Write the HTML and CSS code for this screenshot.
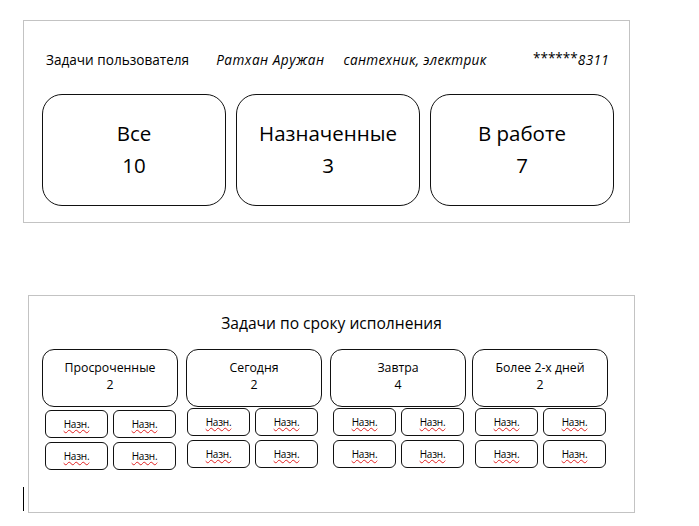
FILE: index.html
```html
<!DOCTYPE html>
<html lang="ru">
<head>
<meta charset="utf-8">
<title>Задачи пользователя</title>
<link rel="stylesheet" href="styles.css">
</head>
<body>
<div class="page">
  <section class="panel panel-top">
    <div class="user-row">
      <span class="u-title">Задачи пользователя</span>
      <span class="u-name">Ратхан Аружан</span>
      <span class="u-role">сантехник, электрик</span>
      <span class="u-phone"><span class="stars">******</span>8311</span>
    </div>
    <div class="stat-row">
      <div class="stat-card"><div>Все</div><div>10</div></div>
      <div class="stat-card"><div>Назначенные</div><div>3</div></div>
      <div class="stat-card"><div>В работе</div><div>7</div></div>
    </div>
  </section>

  <section class="panel panel-bottom">
    <h2 class="due-title">Задачи по сроку исполнения</h2>
    <div class="groups">
      <div class="group g1">
        <div class="cat-card"><div>Просроченные</div><div>2</div></div>
        <div class="subs">
          <div class="sub"><span class="sp">Назн.</span></div>
          <div class="sub"><span class="sp">Назн.</span></div>
          <div class="sub"><span class="sp">Назн.</span></div>
          <div class="sub"><span class="sp">Назн.</span></div>
        </div>
      </div>
      <div class="group g2">
        <div class="cat-card"><div>Сегодня</div><div>2</div></div>
        <div class="subs">
          <div class="sub"><span class="sp">Назн.</span></div>
          <div class="sub"><span class="sp">Назн.</span></div>
          <div class="sub"><span class="sp">Назн.</span></div>
          <div class="sub"><span class="sp">Назн.</span></div>
        </div>
      </div>
      <div class="group g3">
        <div class="cat-card"><div>Завтра</div><div>4</div></div>
        <div class="subs">
          <div class="sub"><span class="sp">Назн.</span></div>
          <div class="sub"><span class="sp">Назн.</span></div>
          <div class="sub"><span class="sp">Назн.</span></div>
          <div class="sub"><span class="sp">Назн.</span></div>
        </div>
      </div>
      <div class="group g4">
        <div class="cat-card"><div>Более 2-х дней</div><div>2</div></div>
        <div class="subs">
          <div class="sub"><span class="sp">Назн.</span></div>
          <div class="sub"><span class="sp">Назн.</span></div>
          <div class="sub"><span class="sp">Назн.</span></div>
          <div class="sub"><span class="sp">Назн.</span></div>
        </div>
      </div>
    </div>
  </section>
  <div class="caret"></div>
</div>
</body>
</html>
```

FILE: styles.css
```css
* { box-sizing: border-box; }
html, body { margin: 0; padding: 0; background: #fff; }
body {
  font-family: "Open Sans", "Liberation Sans", sans-serif;
  color: #000;
  width: 699px;
  height: 526px;
  overflow: hidden;
}
.page { position: relative; padding-top: 20px; }

.panel { border: 1px solid #c3c3c3; background: #fff; }

.panel-top {
  margin-left: 23px;
  width: 607px;
  height: 203px;
  padding: 29px 0 0 18px;
}
.user-row {
  display: flex;
  align-items: baseline;
  font-size: 13.6px;
  height: 20px;
  line-height: 20px;
  white-space: nowrap;
}
.u-title { margin-left: 4px; }
.u-name { margin-left: 27px; font-style: italic; letter-spacing: 0.5px; }
.u-role { margin-left: 19px; font-style: italic; letter-spacing: 0.3px; }
.u-phone { margin-left: auto; margin-right: 20px; font-style: italic; letter-spacing: 0.3px; }
.stars { font-style: normal; position: relative; top: -2px; letter-spacing: 0; }

.stat-row {
  display: flex;
  gap: 10px;
  margin-top: 24px;
}
.stat-card {
  width: 184px;
  height: 112px;
  border: 1.5px solid #111;
  border-radius: 20px;
  display: flex;
  flex-direction: column;
  justify-content: center;
  align-items: center;
  font-size: 20.5px;
  line-height: 32px;
  padding-bottom: 2px;
}

.panel-bottom {
  margin-top: 72px;
  margin-left: 28px;
  width: 607px;
  height: 218px;
  padding: 13px 0 0 13px;
}
.due-title {
  margin: 0;
  font-weight: normal;
  font-size: 15.6px;
  line-height: 28px;
  text-align: center;
  padding-right: 13px;
}
.groups {
  display: flex;
  gap: 8px;
  margin-top: 12px;
}
.group { width: 136px; }
.g4 { margin-left: -2px; }
.cat-card {
  height: 58px;
  border: 1.5px solid #111;
  border-radius: 12px;
  display: flex;
  flex-direction: column;
  justify-content: center;
  align-items: center;
  font-size: 12.3px;
  line-height: 17px;
  padding-bottom: 4px;
}
.subs {
  display: grid;
  grid-template-columns: 63px 63px;
  column-gap: 5px;
  row-gap: 4px;
  margin: 3px 0 0 3px;
}
.g2 .subs, .g3 .subs, .g4 .subs { margin-top: 1px; }
.g2 .subs { margin-left: 1px; }
.sub {
  height: 28px;
  border: 1.5px solid #111;
  border-radius: 6px;
  display: flex;
  align-items: center;
  justify-content: center;
  font-size: 10px;
  letter-spacing: -0.2px;
}
.sp {
  text-decoration: underline wavy #e02020;
  text-decoration-thickness: 1px;
  text-decoration-skip-ink: none;
  text-underline-offset: 1px;
}

.caret {
  position: absolute;
  left: 23px;
  top: 487px;
  width: 1px;
  height: 24px;
  background: #000;
}
```
